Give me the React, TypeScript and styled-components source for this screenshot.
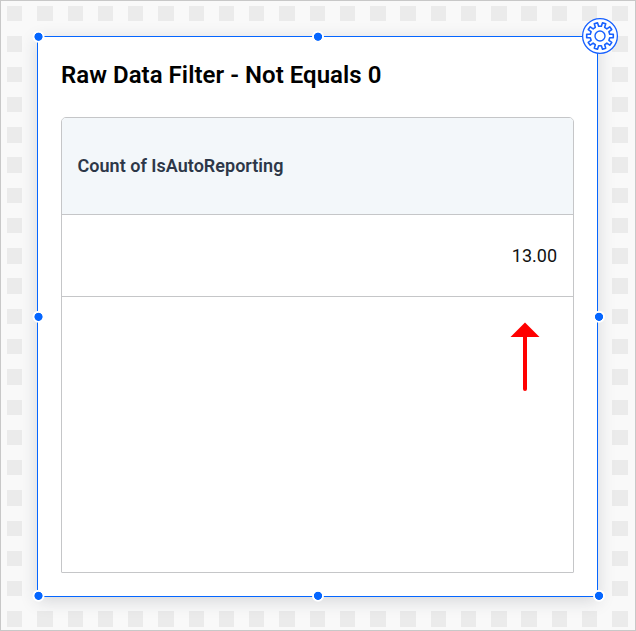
import React from "react";
import styled, { createGlobalStyle } from "styled-components";

const GlobalStyle = createGlobalStyle`
  * { box-sizing: border-box; }
  body { margin: 0; font-family: Roboto, sans-serif; overflow: hidden; }
`;

const GAP = "#f9f9f9";

const Canvas = styled.main`
  width: 636px;
  height: 631px;
  border: 1px solid #c8c8c8;
  padding: 35px 0 0 36px;
  background-color: #ebebeb;
  background-origin: border-box;
  background-image:
    repeating-linear-gradient(90deg, ${GAP} 0 7.1px, transparent 7.1px 22.45px, ${GAP} 22.45px 30.255px),
    repeating-linear-gradient(180deg, ${GAP} 0 6.2px, transparent 6.2px 21.49px, ${GAP} 21.49px 30.255px);
`;

const Card = styled.section`
  position: relative;
  display: flex;
  flex-direction: column;
  width: 561px;
  height: 561px;
  padding: 23px;
  background: #fff;
  border: 1px solid #0566ff;
  box-shadow: 0 4px 16px rgba(40, 50, 65, 0.17);
`;

const Title = styled.h1`
  margin: 0;
  height: 57px;
  line-height: 30px;
  font-size: 24px;
  font-weight: 600;
  letter-spacing: 0.04px;
  color: #000;
`;

const Table = styled.div`
  flex: none;
  display: flex;
  flex-direction: column;
  width: 513px;
  height: 456px;
  border: 1px solid #c5c6c8;
  border-radius: 5px 5px 1px 1px;
  overflow: hidden;
`;

const HeaderRow = styled.div`
  display: flex;
  align-items: center;
  height: 97px;
  padding: 0 15.5px 2px;
  background: #f3f7fa;
  border-bottom: 1px solid #c5c6c8;
  font-size: 18px;
  font-weight: 600;
  letter-spacing: 0.02px;
  color: #2d3748;
`;

const ValueRow = styled.div`
  display: flex;
  align-items: center;
  justify-content: flex-end;
  height: 82px;
  padding: 0 16px;
  border-bottom: 1px solid #c5c6c8;
  font-size: 18px;
  color: #111;
`;

const Arrow = styled.svg`
  align-self: flex-end;
  display: block;
  margin: 25px 33px 0 0;
`;

const Handle = styled.span<{ $x: number; $y: number }>`
  position: absolute;
  left: 0;
  top: 0;
  width: 12px;
  height: 12px;
  transform: translate(${(p) => p.$x - 6}px, ${(p) => p.$y - 6}px);
  border-radius: 50%;
  background: radial-gradient(circle, #0566ff 3.7px, #fff 4.4px);
`;

const SettingsButton = styled.button`
  position: absolute;
  left: 543px;
  top: -20px;
  width: 38px;
  height: 38px;
  padding: 0;
  border: 0;
  background: none;
`;

const Icon = styled.svg`
  display: block;
`;

const handles: [number, number][] = [
  [0.5, -0.3],
  [280, -0.3],
  [0.5, 279.8],
  [561, 279.8],
  [0.5, 558.8],
  [280, 558.8],
  [561, 558.8],
];

/* Ten-toothed outline, with one tooth pointing straight left and right. */
const gearPath = (() => {
  const points: string[] = [];
  const corners: [number, number][] = [
    [-10.2, 9.9],
    [-7.2, 13.4],
    [7.2, 13.4],
    [10.2, 9.9],
  ];
  for (let tooth = 0; tooth < 10; tooth++) {
    for (const [offset, radius] of corners) {
      const angle = ((tooth * 36 + offset) * Math.PI) / 180;
      points.push(`${(radius * Math.cos(angle)).toFixed(2)} ${(radius * Math.sin(angle)).toFixed(2)}`);
    }
  }
  return `M${points.join("L")}Z`;
})();

export default function App() {
  return (
    <>
      <GlobalStyle />
      <Canvas>
        <Card>
          <Title>Raw Data Filter - Not Equals 0</Title>
          <Table>
            <HeaderRow>Count of IsAutoReporting</HeaderRow>
            <ValueRow>13.00</ValueRow>
            <Arrow width="30" height="70" viewBox="0 0 30 70">
              <path d="M15 .5 29.5 15H.5Z" fill="#f00" />
              <path d="M15 12V67" stroke="#f00" strokeWidth="4" strokeLinecap="round" />
            </Arrow>
          </Table>
          {handles.map(([x, y]) => (
            <Handle key={`${x}:${y}`} $x={x} $y={y} />
          ))}
          <SettingsButton aria-label="Settings">
            <Icon width="38" height="38" viewBox="-19 -19 38 38" fill="none" stroke="#1861ff" strokeLinejoin="round">
              <circle r="17.4" fill="#fff" strokeWidth="1.3" />
              <path d={gearPath} strokeWidth="1.6" />
              <circle r="5" strokeWidth="1.4" />
            </Icon>
          </SettingsButton>
        </Card>
      </Canvas>
    </>
  );
}
